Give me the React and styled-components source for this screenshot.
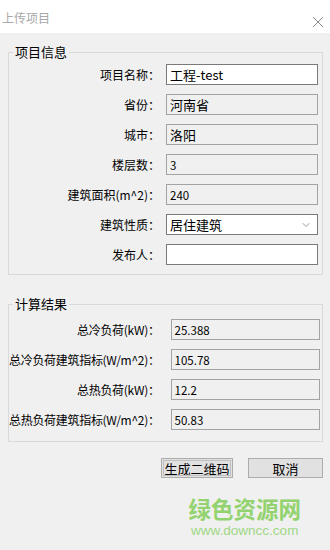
import React from "react";
import styled, { createGlobalStyle } from "styled-components";
import { ChevronDown } from "lucide-react";

const GlobalStyle = createGlobalStyle`
  html, body {
    margin: 0;
    padding: 0;
    background: #f0f0f0;
  }
  * {
    box-sizing: border-box;
  }
`;

const Window = styled.div`
  width: 330px;
  height: 550px;
  background: #f0f0f0;
  font-family: "Noto Sans CJK SC", "Liberation Sans", sans-serif;
  font-size: 12px;
  color: #000;
  overflow: hidden;
`;

const TitleBar = styled.div`
  height: 33px;
  background: #ffffff;
  display: flex;
  align-items: center;
  justify-content: space-between;
  padding: 2px 6px 0 2px;
`;

const Title = styled.span`
  color: #a8a8a8;
  font-size: 12px;
`;

const CloseIcon = styled.svg`
  width: 12px;
  height: 12px;
  margin-top: 8px;
`;

const Body = styled.div`
  padding: 11px 7px 0 8px;
  display: flex;
  flex-direction: column;
`;

const GroupBox = styled.fieldset`
  margin: 0;
  margin-top: ${(p) => p.$top || 0}px;
  border: 1px solid #d9d9d9;
  padding: ${(p) => p.$padTop}px 4px ${(p) => p.$padBottom}px 0;
  min-width: 0;
`;

const Legend = styled.legend`
  font-size: 13px;
  line-height: 16px;
  padding: 0 2px;
  margin-left: 4px;
`;

const Grid = styled.div`
  display: grid;
  grid-template-columns: 1fr ${(p) => p.$field}px;
  column-gap: ${(p) => p.$gap}px;
  row-gap: 9px;
  align-items: center;
`;

const Label = styled.span`
  text-align: right;
  white-space: nowrap;
  font-size: 12px;
  letter-spacing: ${(p) => (p.$tight ? "-0.3px" : "0")};
`;

const Field = styled.div`
  height: 21px;
  border: 1px solid ${(p) => (p.$editable ? "#7a7a7a" : "#a3a3a3")};
  background: ${(p) => (p.$editable ? "#ffffff" : "#f0f0f0")};
  display: flex;
  align-items: center;
  justify-content: space-between;
  padding: 0 5px 0 3px;
  font-size: ${(p) => (p.$small ? 11.5 : 13)}px;
  white-space: nowrap;
`;

const Buttons = styled.div`
  display: flex;
  justify-content: flex-end;
  gap: 15px;
  margin-top: 16px;
`;

const Button = styled.button`
  width: ${(p) => p.$w}px;
  height: 20px;
  padding: 0;
  font-family: inherit;
  font-size: 13px;
  color: #000;
  background: #e1e1e1;
  border: 1px solid #adadad;
  ${(p) => p.$focused && "outline: 1px solid #c0c0c0; outline-offset: -3px;"}
`;

const Watermark = styled.div`
  margin-top: 18px;
  padding-right: 22px;
  align-self: flex-end;
  display: flex;
  flex-direction: column;
  align-items: center;
`;

const MarkTitle = styled.span`
  font-size: 22.5px;
  font-weight: 700;
  color: #93d36f;
  line-height: 24px;
`;

const MarkUrl = styled.span`
  margin-top: 4px;
  font-family: "Liberation Sans", Arial, sans-serif;
  font-size: 13.5px;
  color: #9fd784;
  line-height: 14px;
`;

const projectRows = [
  { label: "项目名称：", value: "工程-test", editable: true },
  { label: "省份：", value: "河南省" },
  { label: "城市：", value: "洛阳" },
  { label: "楼层数：", value: "3", small: true },
  { label: "建筑面积(m^2)：", value: "240", small: true },
  { label: "建筑性质：", value: "居住建筑", editable: true, select: true },
  { label: "发布人：", value: "", editable: true },
];

const resultRows = [
  { label: "总冷负荷(kW)：", value: "25.388" },
  { label: "总冷负荷建筑指标(W/m^2)：", value: "105.78" },
  { label: "总热负荷(kW)：", value: "12.2" },
  { label: "总热负荷建筑指标(W/m^2)：", value: "50.83" },
];

export default function App() {
  return (
    <Window>
      <GlobalStyle />
      <TitleBar>
        <Title>上传项目</Title>
        <CloseIcon viewBox="0 0 12 12">
          <path d="M1 1 L11 11 M11 1 L1 11" stroke="#8a8a8a" strokeWidth="1" />
        </CloseIcon>
      </TitleBar>
      <Body>
        <GroupBox $padTop={4} $padBottom={9}>
          <Legend>项目信息</Legend>
          <Grid $field={152} $gap={6}>
            {projectRows.map((r) => (
              <React.Fragment key={r.label}>
                <Label>{r.label}</Label>
                <Field $editable={r.editable} $small={r.small}>
                  {r.value}
                  {r.select && <ChevronDown size={12} color="#777" strokeWidth={1.5} />}
                </Field>
              </React.Fragment>
            ))}
          </Grid>
        </GroupBox>
        <GroupBox $top={21} $padTop={7} $padBottom={11}>
          <Legend>计算结果</Legend>
          <Grid $field={149} $gap={11}>
            {resultRows.map((r) => (
              <React.Fragment key={r.label}>
                <Label $tight>{r.label}</Label>
                <Field $small>{r.value}</Field>
              </React.Fragment>
            ))}
          </Grid>
        </GroupBox>
        <Buttons>
          <Button $w={72} $focused>生成二维码</Button>
          <Button $w={75}>取消</Button>
        </Buttons>
        <Watermark>
          <MarkTitle>绿色资源网</MarkTitle>
          <MarkUrl>www.downcc.com</MarkUrl>
        </Watermark>
      </Body>
    </Window>
  );
}
